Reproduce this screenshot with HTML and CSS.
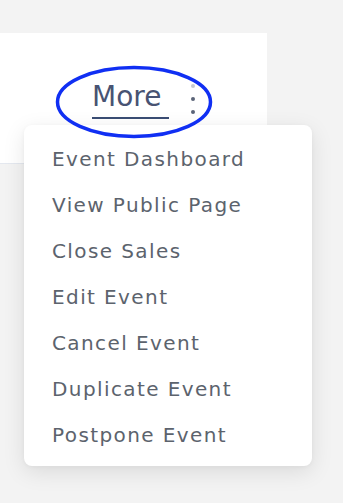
FILE: index.html
```html
<!DOCTYPE html>
<html lang="en">
<head>
<meta charset="utf-8">
<title>More menu</title>
<link rel="stylesheet" href="styles.css">
</head>
<body>
<div class="page">
  <div class="card">
    <div class="actions">
      <a class="more-link" href="#">More</a>
      <svg class="kebab" width="6" height="32" viewBox="0 0 6 32" aria-hidden="true">
        <circle class="faint" cx="3" cy="3" r="2"/>
        <circle cx="3" cy="16" r="2"/>
        <circle cx="3" cy="29" r="2"/>
      </svg>
    </div>
  </div>
  <ul class="menu">
    <li>Event Dashboard</li>
    <li>View Public Page</li>
    <li>Close Sales</li>
    <li>Edit Event</li>
    <li>Cancel Event</li>
    <li>Duplicate Event</li>
    <li>Postpone Event</li>
  </ul>
  <svg class="annotation" width="160" height="76" viewBox="0 0 160 76" aria-hidden="true">
    <ellipse cx="79" cy="37" rx="76.5" ry="34.5"/>
  </svg>
</div>
</body>
</html>
```

FILE: styles.css
```css
html, body {
  margin: 0;
  padding: 0;
  background: #f3f3f3;
}

.page {
  position: relative;
  width: 343px;
  height: 503px;
  padding-top: 33px;
  box-sizing: border-box;
  font-family: "DejaVu Sans", "Liberation Sans", sans-serif;
}

.card {
  width: 267px;
  height: 131px;
  box-sizing: border-box;
  background: #ffffff;
  border-bottom: 1px solid #e4e8ef;
}

.actions {
  display: flex;
  align-items: flex-start;
  padding: 47px 0 0 92px;
}

.more-link {
  display: block;
  font-size: 28px;
  line-height: 34px;
  color: #485373;
  text-decoration: none;
  padding: 0 8px 3px 0;
  border-bottom: 2px solid #3a4d74;
}

.kebab {
  display: block;
  margin: 3px 0 0 21px;
  fill: #5b6478;
}

.kebab .faint {
  opacity: 0.35;
}

.menu {
  position: absolute;
  left: 24px;
  top: 125px;
  width: 288px;
  margin: 0;
  padding: 11px 0 8px;
  box-sizing: border-box;
  list-style: none;
  background: #ffffff;
  border-radius: 8px;
  box-shadow: 0 6px 22px rgba(0, 0, 0, 0.10), 0 1px 4px rgba(0, 0, 0, 0.04);
}

.menu li {
  height: 46px;
  line-height: 46px;
  padding-left: 28px;
  font-size: 20px;
  letter-spacing: 1.4px;
  color: #5c636d;
  white-space: nowrap;
}

.annotation {
  position: absolute;
  left: 55px;
  top: 65px;
  fill: none;
  stroke: #102ff3;
  stroke-width: 3.5;
  z-index: 2;
}
```
